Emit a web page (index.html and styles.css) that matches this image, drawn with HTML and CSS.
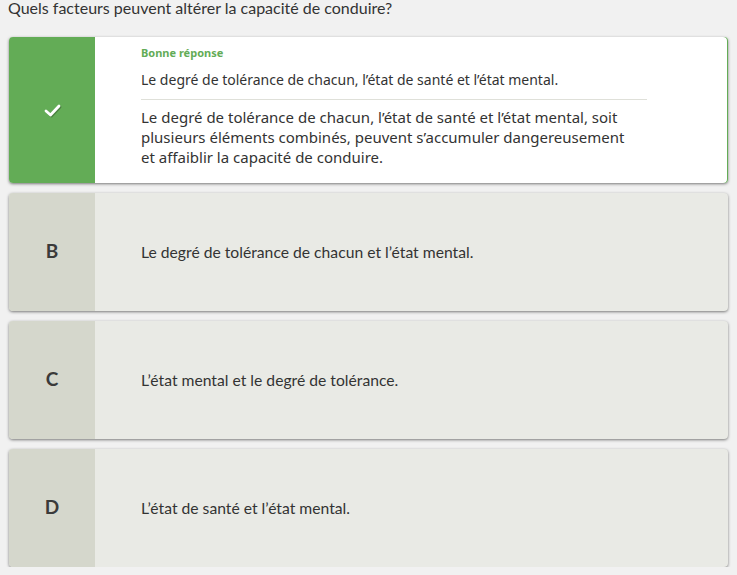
FILE: index.html
```html
<!DOCTYPE html>
<html lang="fr">
<head>
<meta charset="utf-8">
<link rel="stylesheet" href="styles.css">
</head>
<body>
<div class="page">
  <div class="question">Quels facteurs peuvent altérer la capacité de conduire?</div>
  <div class="answers">
    <div class="card card-correct">
      <div class="letter letter-correct">
        <svg class="check" width="17" height="15" viewBox="0 0 17 15"><path d="M2 8 L6.5 12 L15 3" fill="none" stroke="#fff" stroke-width="2.8" stroke-linecap="round" stroke-linejoin="round"/></svg>
      </div>
      <div class="body body-correct">
        <div class="label">Bonne réponse</div>
        <div class="answer-text">Le degré de tolérance de chacun, l’état de santé et l’état mental.</div>
        <div class="explanation">Le degré de tolérance de chacun, l’état de santé et l’état mental, soit plusieurs éléments combinés, peuvent s’accumuler dangereusement<br>et affaiblir la capacité de conduire.</div>
      </div>
    </div>
    <div class="card">
      <div class="letter">B</div>
      <div class="body">Le degré de tolérance de chacun et l’état mental.</div>
    </div>
    <div class="card">
      <div class="letter">C</div>
      <div class="body">L’état mental et le degré de tolérance.</div>
    </div>
    <div class="card">
      <div class="letter">D</div>
      <div class="body">L’état de santé et l’état mental.</div>
    </div>
  </div>
</div>
</body>
</html>
```
FILE: styles.css
```css
html, body {
  margin: 0;
  padding: 0;
  background: #f1f1f1;
}
.page {
  padding: 0 8px;
  font-family: Lato, "Liberation Sans", sans-serif;
  color: #333;
}
.question {
  font-size: 16px;
  line-height: 16px;
  color: #333;
  margin-bottom: 21px;
}
.answers {
  display: flex;
  flex-direction: column;
  gap: 10px;
  padding: 0 1px;
}
.card {
  display: flex;
  height: 118px;
  background: #e9eae5;
  border-radius: 4px;
  box-shadow: 0 1px 3px rgba(0,0,0,0.5);
  overflow: hidden;
}
.card-correct {
  height: 146px;
  background: #fff;
  box-shadow: 0 1px 3px rgba(0,0,0,0.5), inset -1px 0 0 #63ac56;
}
.letter {
  flex: 0 0 86px;
  display: flex;
  align-items: center;
  justify-content: center;
  background: #d5d7cc;
  font-size: 19px;
  font-weight: 700;
  color: #3a3a3a;
  padding-bottom: 3px;
  box-sizing: border-box;
}
.letter-correct {
  background: #63ac56;
  padding-bottom: 0;
}
.check {
  filter: drop-shadow(1px 1px 0 rgba(0,0,0,0.25));
}
.body {
  display: flex;
  align-items: center;
  padding-left: 46px;
  font-size: 15.7px;
  color: #333;
}
.body-correct {
  flex-direction: column;
  align-items: flex-start;
  padding-top: 8px;
  width: 506px;
  font-family: "Noto Sans", "Open Sans", sans-serif;
}
.label {
  font-size: 11px;
  font-weight: 700;
  color: #63ac56;
  line-height: 16px;
}
.answer-text {
  font-size: 14px;
  line-height: 20px;
  margin-top: 9px;
  padding-bottom: 9px;
  border-bottom: 1px solid #dfe0d9;
  width: 100%;
}
.explanation {
  font-size: 15px;
  line-height: 20px;
  margin-top: 7px;
}
```
